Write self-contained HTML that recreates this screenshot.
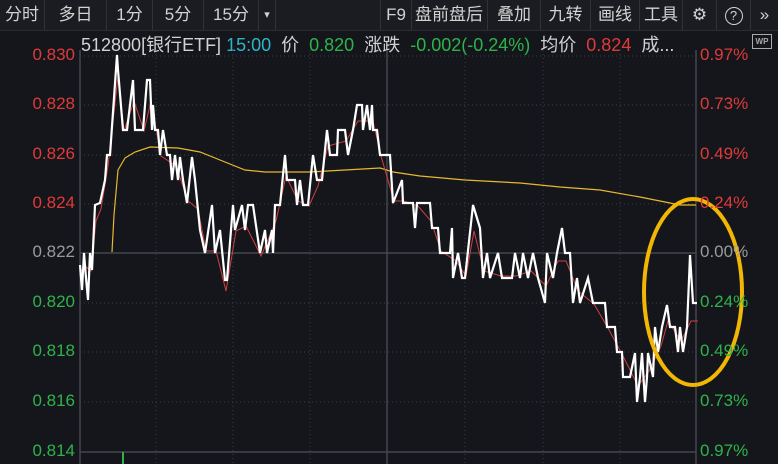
<!DOCTYPE html><html><head><meta charset="utf-8"><style>
body{margin:0;width:778px;height:464px;background:#14161b;overflow:hidden;font-family:"Liberation Sans","Noto Sans CJK SC",sans-serif;position:relative}
.tb{position:absolute;top:0;left:0;width:778px;height:30px;background:#1a1c21;border-bottom:1px solid #2a2c31}
.b{position:absolute;top:0;height:30px;line-height:30px;color:#d2d2d2;font-size:17px;text-align:center;border-right:1px solid #303238}
.t{position:absolute;font-size:18px;white-space:nowrap}
.l{position:absolute;font-size:17px;right:703px;text-align:right}
.r{position:absolute;font-size:17px;left:700px}
</style></head><body>
<div class="tb">
<div class="b" style="left:0;width:44px">分时</div>
<div class="b" style="left:45px;width:61px">多日</div>
<div class="b" style="left:107px;width:45px">1分</div>
<div class="b" style="left:153px;width:50px">5分</div>
<div class="b" style="left:204px;width:54px">15分</div>
<div class="b" style="left:259px;width:16px;font-size:11px">▾</div>
<div class="b" style="left:380px;width:30px;border-left:1px solid #303238">F9</div>
<div class="b" style="left:411px;width:76px">盘前盘后</div>
<div class="b" style="left:488px;width:52px">叠加</div>
<div class="b" style="left:541px;width:49px">九转</div>
<div class="b" style="left:591px;width:48px">画线</div>
<div class="b" style="left:640px;width:42px">工具</div>
<div class="b" style="left:683px;width:33px">⚙</div>
<div class="b" style="left:717px;width:33px"><span style="display:inline-block;width:16px;height:16px;border:1.5px solid #d2d2d2;border-radius:50%;line-height:16px;font-size:13px;margin-top:6px">?</span></div>
<div class="b" style="left:751px;width:27px;border:none">»</div>
</div>
<div class="t" style="left:81px;top:31px;color:#d2d2d2">512800[银行ETF] <span style="color:#2fb5c8">15:00</span>&nbsp; 价 &nbsp;<span style="color:#2eb34b">0.820</span>&nbsp; 涨跌 &nbsp;<span style="color:#2eb34b">-0.002(-0.24%)</span>&nbsp; 均价 &nbsp;<span style="color:#e03a3a">0.824</span>&nbsp; 成...</div>
<div style="position:absolute;left:752px;top:34px;width:18px;height:13px;border:1.5px solid #aaa;font-size:8px;color:#aaa;text-align:center;line-height:13px;font-weight:bold">WP</div>
<svg width="778" height="464" style="position:absolute;left:0;top:0">
<g stroke="#3a3d44" stroke-dasharray="1,3" stroke-width="1">
<line x1="80" x2="696" y1="56" y2="56"/><line x1="80" x2="696" y1="105" y2="105"/><line x1="80" x2="696" y1="155" y2="155"/><line x1="80" x2="696" y1="204" y2="204"/><line x1="80" x2="696" y1="303" y2="303"/><line x1="80" x2="696" y1="352" y2="352"/><line x1="80" x2="696" y1="402" y2="402"/>
<line x1="156" x2="156" y1="50" y2="464"/><line x1="233" x2="233" y1="50" y2="464"/><line x1="310" x2="310" y1="50" y2="464"/><line x1="465" x2="465" y1="50" y2="464"/><line x1="543" x2="543" y1="50" y2="464"/><line x1="620" x2="620" y1="50" y2="464"/>
</g>
<g stroke="#44474e" stroke-width="1.5"><line x1="80" x2="696" y1="253" y2="253"/><line x1="387" x2="387" y1="50" y2="464"/><line x1="80" x2="80" y1="50" y2="464"/><line x1="696" x2="696" y1="50" y2="464"/><line x1="80" x2="696" y1="452" y2="452"/></g>
<line x1="123" x2="123" y1="452" y2="464" stroke="#2eb34b" stroke-width="2"/>
<polyline fill="none" stroke="#e8b830" stroke-width="1.2" points="112,252 114,215 118,170 125,158 135,152 150,147 178,148 200,152 220,160 245,170 265,172 310,172 345,170 380,168 393,172 420,176 465,180 520,183 560,187 600,190 640,197 680,205 696,205"/>
<polyline fill="none" stroke="#d04040" stroke-width="1" transform="translate(1,6)" points="80,265 84,260 90,265 95,215 100,203 107,160 117,70 123,125 133,95 143,125 150,95 160,150 175,160 187,195 197,203 205,245 215,245 225,285 235,225 245,220 260,250 275,215 285,170 297,195 308,200 317,180 327,140 345,135 357,115 372,115 380,150 393,195 403,195 417,200 430,215 440,245 455,255 465,270 473,225 483,265 500,270 515,270 530,265 545,280 557,255 565,255 577,285 593,298 607,322 622,350 637,380 648,365 660,340 667,315 680,335 690,315 697,315"/>
<polyline fill="none" stroke="#fff" stroke-width="2.2" stroke-linejoin="miter" points="80,265 82,290 84,253 86,278 88,300 90,253 92,270 95,205 100,203 105,180 107,155 110,155 117,55 118,70 123,130 127,130 133,80 135,130 143,130 147,80 150,80 152,130 153,105 155,130 158,130 160,155 163,130 167,155 170,155 172,180 175,155 178,180 180,157 183,180 187,203 192,157 195,180 200,230 205,253 212,205 215,253 220,230 225,280 227,280 233,205 235,230 242,205 245,230 248,205 253,205 260,253 265,230 267,253 272,230 273,253 275,205 280,205 285,155 287,180 295,180 297,205 300,180 303,205 308,205 313,155 317,180 322,180 327,130 330,155 337,155 338,130 345,130 348,155 353,130 357,105 362,105 363,130 367,105 370,130 372,105 373,130 377,130 380,155 390,155 393,203 402,180 403,203 413,203 415,228 417,203 430,203 432,228 438,228 440,253 450,253 452,228 453,278 458,253 462,278 465,278 473,205 480,228 483,278 487,253 490,278 498,253 502,278 512,278 515,253 520,278 523,253 528,278 533,253 538,278 545,303 547,253 553,278 557,253 562,228 565,253 570,253 573,303 577,278 580,303 588,278 593,303 600,303 605,303 607,327 615,327 617,352 622,352 623,377 630,377 635,353 637,402 640,377 642,353 645,402 647,377 648,353 653,377 655,327 658,352 662,327 667,305 670,327 675,327 678,352 680,327 683,352 687,327 689,280 690,255 693,303 697,303"/>
<ellipse cx="693" cy="292" rx="49" ry="93" fill="none" stroke="#f2b705" stroke-width="4"/>
</svg>
<div class="l" style="top:45px;color:#e03a3a">0.830</div>
<div class="l" style="top:94px;color:#e03a3a">0.828</div>
<div class="l" style="top:144px;color:#e03a3a">0.826</div>
<div class="l" style="top:193px;color:#e03a3a">0.824</div>
<div class="l" style="top:242px;color:#9a9a9a">0.822</div>
<div class="l" style="top:292px;color:#2eb34b">0.820</div>
<div class="l" style="top:341px;color:#2eb34b">0.818</div>
<div class="l" style="top:391px;color:#2eb34b">0.816</div>
<div class="l" style="top:441px;color:#2eb34b">0.814</div>
<div class="r" style="top:45px;color:#e03a3a">0.97%</div>
<div class="r" style="top:94px;color:#e03a3a">0.73%</div>
<div class="r" style="top:144px;color:#e03a3a">0.49%</div>
<div class="r" style="top:193px;color:#e03a3a">0.24%</div>
<div class="r" style="top:242px;color:#9a9a9a">0.00%</div>
<div class="r" style="top:292px;color:#2eb34b">0.24%</div>
<div class="r" style="top:341px;color:#2eb34b">0.49%</div>
<div class="r" style="top:391px;color:#2eb34b">0.73%</div>
<div class="r" style="top:441px;color:#2eb34b">0.97%</div>
</body></html>
